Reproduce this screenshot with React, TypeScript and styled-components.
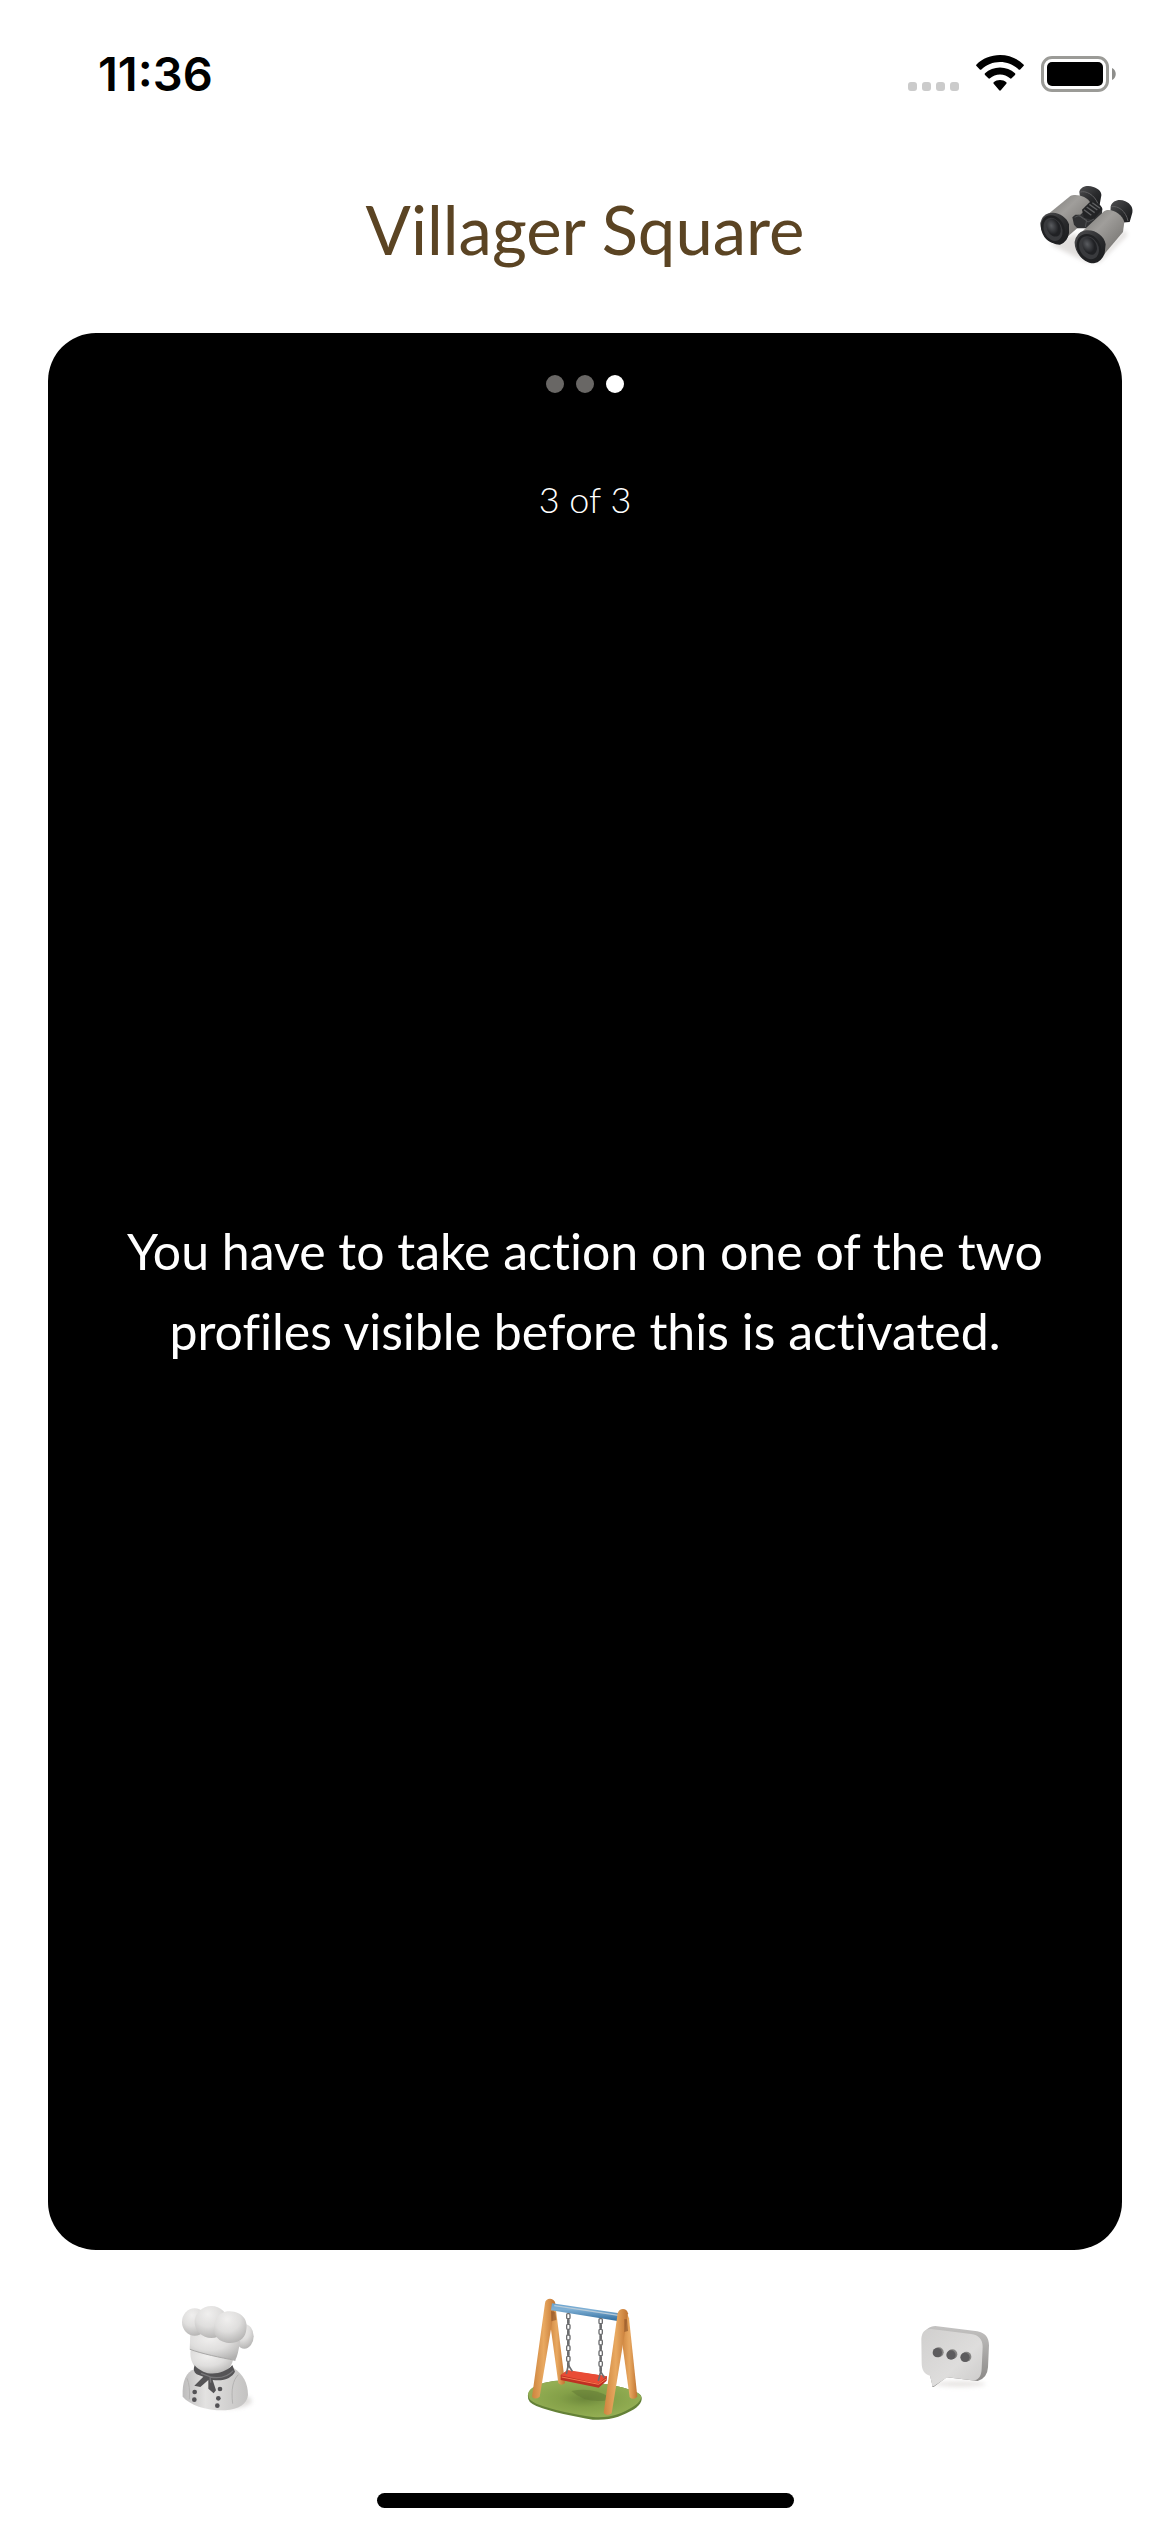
import React from "react";
import styled, { createGlobalStyle } from "styled-components";

const GlobalStyle = createGlobalStyle`
  *, *::before, *::after { box-sizing: border-box; }
  body { margin: 0; background: #fff; }
`;

const Screen = styled.div`
  display: flex;
  flex-direction: column;
  min-height: 100vh;
  background: #fff;
  color: #000;
  font-family: Lato, "Open Sans", sans-serif;
  font-variant-ligatures: none;
`;

const StatusBar = styled.div`
  display: flex;
  align-items: center;
  justify-content: space-between;
  height: 148px;
  padding: 0 53px 0 98px;
`;

const Clock = styled.time`
  font: 600 47px/56px Inter, "Liberation Sans", sans-serif;
`;

const StatusIcons = styled.div`
  display: flex;
  align-items: center;
`;

const Header = styled.header`
  display: grid;
  grid-template-columns: 1fr auto 1fr;
  align-items: start;
  height: 185px;
  padding: 17px 20px 0;
`;

const Title = styled.h1`
  grid-column: 2;
  margin: 24px 0 0;
  color: #5b4423;
  font-size: 67px;
  font-weight: 400;
  line-height: 80px;
`;

const IconButton = styled.button`
  display: flex;
  align-items: center;
  justify-content: center;
  justify-self: center;
  padding: 0;
  border: 0;
  background: none;
  cursor: pointer;
`;

const HeaderButton = styled(IconButton)`
  justify-self: end;
`;

const Card = styled.main`
  display: flex;
  flex: 1;
  flex-direction: column;
  align-items: center;
  margin: 0 48px;
  padding: 42px 48px;
  border-radius: 48px;
  background: #000;
  color: #fff;
`;

const Dots = styled.div`
  display: flex;
  gap: 12px;
`;

const Dot = styled.span<{ $active: boolean }>`
  width: 18px;
  height: 18px;
  border-radius: 50%;
  background: ${(p) => (p.$active ? "#fff" : "#696765")};
`;

const Counter = styled.p`
  margin: 84px 0 0;
  font-size: 36px;
  font-weight: 300;
  line-height: 44px;
`;

const MessageArea = styled.div`
  display: flex;
  flex: 1;
  align-items: center;
  padding-bottom: 148px;
`;

const Message = styled.p`
  margin: 0;
  font-size: 50px;
  line-height: 80px;
  text-align: center;
  text-wrap: balance;
`;

const TabBar = styled.nav`
  display: grid;
  grid-template-columns: repeat(3, 1fr);
  padding: 30px 33px 53px;
`;

const HomeIndicator = styled.div`
  align-self: center;
  width: 417px;
  height: 15px;
  margin-bottom: 24px;
  border-radius: 8px;
  background: #000;
`;

function SystemIcons() {
  return (
    <svg width="218" height="60" viewBox="0 0 218 60" aria-hidden="true">
      <g fill="#cbcbcb">
        {[9, 23, 37, 51].map((x) => (
          <rect key={x} x={x} y="38" width="9" height="9" rx="3" />
        ))}
      </g>
      <g transform="translate(77 11)">
        <path d="M24 0C15 0 6.500 3.500 0.500 9.500q-.8.800 0 1.600l3.300 3.400q.8.700 1.600 0C10.500 9.700 17 7 24 7s13.500 2.700 18.600 7.500q.8.700 1.600 0l3.300-3.400q.8-.8 0-1.600C41.500 3.500 33 0 24 0Z" />
        <path d="M24 12.500c-5.700 0-11 2.200-15 5.800q-.8.800 0 1.600l3.400 3.400q.8.700 1.600 0c2.700-2.400 6.200-3.800 10-3.800s7.300 1.400 10 3.800q.8.700 1.600 0l3.400-3.400q.8-.8 0-1.600c-4-3.600-9.300-5.800-15-5.800Z" />
        <path d="M24 25c-2.400 0-4.600.8-6.300 2.200q-.8.800 0 1.600l5.500 6.500q.8.800 1.600 0l5.500-6.500q.8-.8 0-1.600C28.600 25.800 26.400 25 24 25Z" />
      </g>
      <rect x="143.500" y="13.500" width="65" height="33" rx="9.500" fill="none" stroke="#9b9b97" strokeWidth="3" />
      <rect x="148" y="18" width="56" height="24" rx="5" />
      <path d="M213 24c5 2 5 10 0 12Z" fill="#8e8e8b" />
    </svg>
  );
}

function Binoculars() {
  return (
    <svg width="130" height="120" viewBox="0 0 390 360" aria-hidden="true">
      <defs>
        <linearGradient id="barrel" x1="0" y1="0" x2="1" y2="1">
          <stop offset="0" stopColor="#777673" />
          <stop offset=".4" stopColor="#a09e9b" />
          <stop offset="1" stopColor="#6b6966" />
        </linearGradient>
        <linearGradient id="rubber" x1="0" y1="0" x2="1" y2="1">
          <stop offset="0" stopColor="#505052" />
          <stop offset=".55" stopColor="#2b2c2e" />
          <stop offset="1" stopColor="#18191b" />
        </linearGradient>
        <radialGradient id="lens" cx=".4" cy=".35">
          <stop offset="0" stopColor="#5a5c60" />
          <stop offset="1" stopColor="#202124" />
        </radialGradient>
        <filter id="shade" x="-20%" y="-40%" width="140%" height="180%">
          <feGaussianBlur stdDeviation="7" />
        </filter>
      </defs>
      <path d="M90 238 170 205 190 270 220 298 315 195 322 210 240 292 200 292Z" fill="#bbb6b2" opacity=".45" filter="url(#shade)" />
      <path d="M178 80C183 64 203 60 220 66C237 71 248 83 243 97L239 119L200 122L180 96Z" fill="url(#rubber)" />
      <path d="M181 81c16-5 43 8 53 36" fill="none" stroke="#606062" strokeWidth="3" />
      <path d="M82 149 151 93C167 84 202 94 211 113L207 159 144 214Z" fill="url(#barrel)" />
      <path d="M157 157 166 149 181 149 209 122 237 116 247 131 246 147 210 190 172 190 162 179Z" fill="#303133" />
      <path d="M186 134 209 112C222 106 245 119 247 133L219 165 192 158Z" fill="#222325" />
      <path d="m192 134 22 17m-14-25 24 17m-16-25 24 17m-15-22 23 17" stroke="#606163" strokeWidth="4" />
      <path d="M164 157q15-9 22 0l14 8-4 21m-20-35 28 20 18-9" fill="none" stroke="#515254" strokeWidth="3" />
      <path d="M272 124C278 106 298 101 316 109C332 116 340 129 337 143L329 171L293 174L271 145Z" fill="url(#rubber)" />
      <path d="M274 125c20-4 44 13 50 43" fill="none" stroke="#5d5d5f" strokeWidth="3" />
      <path d="M186 200 252 139C270 126 306 145 313 171L309 201 250 271Z" fill="url(#barrel)" />
      <path d="M61 174Q66 151 86 145C111 137 140 155 147 178L147 204Q143 231 120 239C91 240 60 204 61 174Z" fill="url(#rubber)" />
      <ellipse cx="99" cy="193" rx="34" ry="44" transform="rotate(-25 99 193)" fill="#202123" />
      <ellipse cx="99" cy="193" rx="27" ry="36" transform="rotate(-25 99 193)" fill="#393a3d" />
      <ellipse cx="101" cy="188" rx="20" ry="28" transform="rotate(-25 101 188)" fill="url(#lens)" />
      <path d="M164 230Q170 202 192 197C222 190 253 211 257 238L254 265Q246 290 222 295C191 296 162 260 164 230Z" fill="url(#rubber)" />
      <ellipse cx="207" cy="249" rx="35" ry="44" transform="rotate(-28 207 249)" fill="#202123" />
      <ellipse cx="207" cy="248" rx="28" ry="36" transform="rotate(-28 207 248)" fill="#393a3d" />
      <ellipse cx="209" cy="243" rx="20" ry="28" transform="rotate(-28 209 243)" fill="url(#lens)" />
    </svg>
  );
}

function Chef() {
  return (
    <svg width="150" height="160" viewBox="-54 0 450 480" aria-hidden="true">
      <defs>
        <radialGradient id="puff" cx=".4" cy=".25" r=".8">
          <stop offset="0" stopColor="#f0efee" />
          <stop offset=".5" stopColor="#dfdedd" />
          <stop offset="1" stopColor="#b2b1b0" />
        </radialGradient>
        <linearGradient id="coat">
          <stop offset="0" stopColor="#bdbcbc" />
          <stop offset=".35" stopColor="#e3e2e1" />
          <stop offset="1" stopColor="#c3c2c1" />
        </linearGradient>
        <filter id="chefShade" x="-30%" y="-50%" width="160%" height="200%">
          <feGaussianBlur stdDeviation="7" />
        </filter>
      </defs>
      <ellipse cx="208" cy="363" rx="68" ry="22" fill="#bcb8b5" opacity=".45" filter="url(#chefShade)" />
      <path d="M105 267C78 275 66 303 68 350C90 375 137 392 196 391C235 389 262 371 264 345C264 309 249 282 220 263Z" fill="url(#coat)" />
      <path d="M218 371c-5-42 0-70 17-87M88 358q3-40-7-63" fill="none" stroke="#b4b3b2" strokeWidth="3" />
      <path d="M92 211C87 244 107 279 149 283C190 287 213 268 219 239Z" fill="url(#puff)" />
      <path d="M104 256C99 267 101 276 110 283L130 290 103 317 121 321 145 300 145 326 161 340 168 331 158 300C194 305 216 292 225 275L217 255C197 279 156 287 130 275Q111 266 104 256Z" fill="#555456" />
      <path d="m123 280 27 10 2 18m-3-17c32 6 56-2 71-19" fill="none" stroke="#79787a" strokeWidth="4" />
      <ellipse cx="253" cy="169" rx="28" ry="37" fill="url(#puff)" />
      <path d="M91 159 89 209C120 220 180 232 226 241Q235 223 240 184L171 156Z" fill="url(#puff)" />
      <path d="M90 208C125 221 181 233 226 241" stroke="#aaa9a8" strokeWidth="3" fill="none" />
      <ellipse cx="104" cy="126" rx="38" ry="41" fill="url(#puff)" />
      <ellipse cx="154" cy="126" rx="50" ry="48" fill="url(#puff)" />
      <path d="M164 162C157 121 176 93 209 94C246 95 267 120 258 155C252 182 225 192 200 188Q174 184 164 162Z" fill="url(#puff)" />
      <g fill="#535255">
        {[[104, 336], [103, 359], [180, 327], [175, 355], [172, 377]].map(([x, y]) => (
          <circle key={y} cx={x} cy={y} r="7" />
        ))}
      </g>
    </svg>
  );
}

function Swing() {
  return (
    <svg width="150" height="160" viewBox="0 0 450 480" aria-hidden="true">
      <defs>
        <linearGradient id="wood">
          <stop offset="0" stopColor="#cd843e" />
          <stop offset=".5" stopColor="#e9a961" />
          <stop offset="1" stopColor="#c07432" />
        </linearGradient>
        <linearGradient id="beam" x1="0" y1="0" x2="0" y2="1">
          <stop offset="0" stopColor="#6aa3cf" />
          <stop offset=".35" stopColor="#7fb0d5" />
          <stop offset="1" stopColor="#2f6b9c" />
        </linearGradient>
        <radialGradient id="grass">
          <stop offset="0" stopColor="#6d883b" />
          <stop offset=".45" stopColor="#84a048" />
          <stop offset="1" stopColor="#93ae53" />
        </radialGradient>
      </defs>
      <path d="M54 351C50 322 105 302 163 301C250 302 355 321 387 341C404 352 393 374 372 388C339 407 303 423 248 419C192 409 126 397 79 378Q52 366 54 351Z" fill="#648137" />
      <path d="M55 346C50 320 107 302 163 301C250 302 355 321 387 341C401 350 391 367 368 381C337 400 302 415 249 411C193 402 126 390 79 371Q55 361 55 346Z" fill="url(#grass)" />
      <path d="M184 333q62-13 112 17l-12 12q-60 7-100-29Z" fill="#637a35" opacity=".55" />
      <g fill="url(#wood)">
        <path d="M116 72C128 64 137 79 139 98L165 309Q154 320 145 309L119 120Z" />
        <path d="M336 101Q349 92 357 115L382 350Q370 362 359 352L334 170Z" />
        <path d="M105 70C106 52 133 52 136 70L89 350Q76 361 66 350Z" />
      </g>
      <path d="m123 93 13 3 3 24-15 4Z" fill="#8f5429" opacity=".65" />
      <path d="m126 70 202 30-5 23-200-32Z" fill="url(#beam)" />
      <path d="m133 77 193 29" stroke="#b8cbd9" strokeWidth="4" />
      <path d="M323 100C327 83 351 83 354 100L305 400Q292 410 281 399Z" fill="url(#wood)" />
      <path d="m343 117 8 1 3 35-11 3Z" fill="#8f5429" opacity=".65" />
      <path d="m172 272 119 17-1 13-24 21-114-23v-15Z" fill="#bf3023" />
      <path d="m172 270 119 19-25 22-114-25Z" fill="#e94c35" />
      <path d="m155 291 111 22 22-16" fill="none" stroke="#f77b4e" strokeWidth="3" />
      <g fill="none" stroke="#6c6d6f" strokeWidth="4">
        {Array.from({ length: 10 }, (_, i) => (
          <g key={i}>
            <rect x={i % 2 ? 173 : 170} y={101 + i * 16} width={i % 2 ? 4 : 10} height="15" rx="3" />
            <rect x={i % 2 ? 270 : 267} y={116 + i * 16} width={i % 2 ? 4 : 10} height="15" rx="3" />
          </g>
        ))}
        <path d="m175 255-6 27m6-27 12 19M272 275l-7 28m7-28 11 18" strokeWidth="5" />
      </g>
    </svg>
  );
}

function ChatBubble() {
  return (
    <svg width="150" height="160" viewBox="-66 -150 450 480" aria-hidden="true">
      <defs>
        <linearGradient id="bubble" x1="0" y1="0" x2="1" y2="1">
          <stop offset="0" stopColor="#d0cfce" />
          <stop offset=".6" stopColor="#dedddc" />
          <stop offset="1" stopColor="#cbcac9" />
        </linearGradient>
        <linearGradient id="bubbleSide" x1="0" y1="0" x2="0" y2="1">
          <stop offset="0" stopColor="#c4c3c2" />
          <stop offset="1" stopColor="#858381" />
        </linearGradient>
        <filter id="chatShade" x="-20%" y="-80%" width="140%" height="260%">
          <feGaussianBlur stdDeviation="7" />
        </filter>
      </defs>
      <ellipse cx="180" cy="162" rx="76" ry="9" fill="#bdb6b1" opacity=".35" filter="url(#chatShade)" />
      <path d="M70 12C76 0 88-12 106-12L232 4C255 8 267 23 267 46L264 112Q262 145 233 153L140 142 101 171Q95 172 96 161L90 136Z" fill="url(#bubbleSide)" />
      <path d="M64 26C66 6 74-4 94-3L213 12C236 15 248 28 248 50L245 116C244 141 234 152 216 151L142 142 101 169Q95 172 96 161L90 137C72 131 65 120 65 98Z" fill="url(#bubble)" />
      <g fill="#858483">
        {[[116, 67], [157, 73], [199, 80]].map(([x, y]) => (
          <circle key={x} cx={x} cy={y} r="15" />
        ))}
      </g>
      <g fill="#5d5c5e">
        {[[112, 68], [153, 75], [195, 82]].map(([x, y]) => (
          <circle key={x} cx={x} cy={y} r="14" />
        ))}
      </g>
    </svg>
  );
}

const PAGES = [1, 2, 3];
const CURRENT_PAGE = 3;

export default function App() {
  return (
    <Screen>
      <GlobalStyle />
      <StatusBar>
        <Clock>11:36</Clock>
        <StatusIcons>
          <SystemIcons />
        </StatusIcons>
      </StatusBar>
      <Header>
        <Title>Villager Square</Title>
        <HeaderButton type="button" aria-label="Explore">
          <Binoculars />
        </HeaderButton>
      </Header>
      <Card>
        <Dots>
          {PAGES.map((page) => (
            <Dot key={page} $active={page === CURRENT_PAGE} />
          ))}
        </Dots>
        <Counter>3 of 3</Counter>
        <MessageArea>
          <Message>You have to take action on one of the two profiles visible before this is activated.</Message>
        </MessageArea>
      </Card>
      <TabBar>
        <IconButton type="button" aria-label="Profile">
          <Chef />
        </IconButton>
        <IconButton type="button" aria-label="Villager Square">
          <Swing />
        </IconButton>
        <IconButton type="button" aria-label="Messages">
          <ChatBubble />
        </IconButton>
      </TabBar>
      <HomeIndicator />
    </Screen>
  );
}
